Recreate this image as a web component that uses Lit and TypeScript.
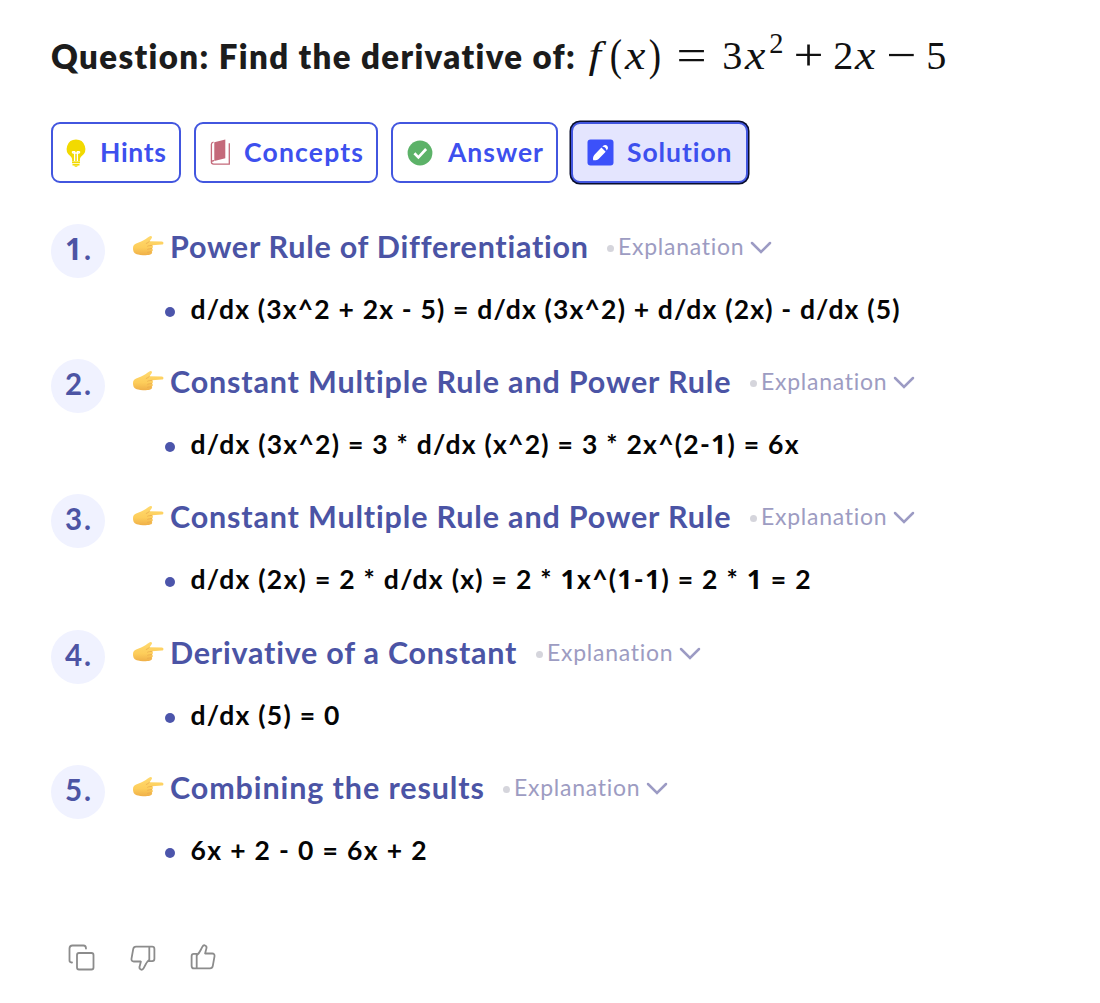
import { LitElement, html, css, svg } from "lit";
import { customElement, property } from "lit/decorators.js";

/** A single line of text, tracked so that it fills the given width. */
@customElement("fit-text")
class FitText extends LitElement {
  @property() text = "";
  @property({ type: Number }) width = 0;

  static styles = css`
    :host { display: inline-block; white-space: pre; text-align: left; }
    .line { display: inline-block; }
    .one { font-family: "Open Sans", sans-serif; font-weight: 700; }
  `;

  render() {
    const parts = this.text.split(/(1)/);
    return html`<span class="line">${parts.map((p) => (p === "1" ? html`<span class="one">1</span>` : p))}</span>`;
  }

  async firstUpdated() {
    await document.fonts.ready;
    const line = this.renderRoot.querySelector(".line") as HTMLElement;
    const natural = line.getBoundingClientRect().width;
    const gaps = Math.max(1, this.text.length - 1);
    line.style.letterSpacing = `${(this.width - natural) / gaps}px`;
    this.style.width = `${this.width}px`;
  }
}

const bulb = svg`<svg width="20" height="28" viewBox="0 0 20 28">
  <path fill="#f2da00" d="M10 .5a9.300 9.300 0 0 0-5.500 16.800c1 .9 1.500 1.800 1.600 3v2.200h7.800v-2.200c.1-1.200.6-2.100 1.600-3A9.300 9.300 0 0 0 10 .5z"/>
  <path fill="none" stroke="#fff" stroke-width="1.300" d="M6.200 12.700h2.400v9.300M13.800 12.700h-2.400v9.300M6.200 12.700c.3 1.600 1.300 1.600 2.400 1.300M13.800 12.700c-.3 1.600-1.300 1.600-2.400 1.300M8.600 14h2.800"/>
  <path fill="none" stroke="#f2da00" stroke-width="1.500" d="M6 23.600h8M6.500 25.700h7"/><path fill="#f2da00" d="M8 26.400h4l-1 1.400H9z"/></svg>`;

const book = svg`<svg width="21" height="27" viewBox="0 0 21 27">
  <path fill="#c4697a" d="M4.300 3.300 15.300.6v18.600L4.300 22z"/>
  <path fill="none" stroke="#c4697a" stroke-width="1.300" d="M3.500 3.200C1.700 3.500 1.400 4.200 1.400 5.300v17.800c0 1.600.8 2.100 2.200 2.100h15.700V4.200M2 22.600c.3-.8 1-.9 2-.9"/></svg>`;

const check = svg`<svg width="26" height="26" viewBox="0 0 26 26"><circle cx="13" cy="13" r="12.400" fill="#5cb268"/>
  <path d="M7.400 13.300l4 4.100 7.700-8.400" fill="none" stroke="#fff" stroke-width="2.700"/></svg>`;

const pencil = svg`<svg width="27" height="27" viewBox="0 0 27 27"><rect x=".5" y=".5" width="26" height="26" rx="3" fill="#3c51fa"/>
  <path fill="#fff" d="M6.200 21.200c-.5-2 .1-4.300 1.500-5.700l6.700-6.900 4.300 4.200-6.800 6.900c-1.400 1.300-3.700 2-5.700 1.500zM15.300 7.700l.9-.9c1.200-1.200 2.900-1.100 3.900-.1 1.100 1.100 1.200 2.900.1 4l-.7.900c.1-2.300-1.700-4.100-4.200-3.900z"/></svg>`;

const hand = html`<svg class="hand" width="32" height="22" viewBox="0 0 32 22">
  <defs><linearGradient id="skin" x1="0" y1="0" x2="0" y2="1"><stop offset="0" stop-color="#ffda70"/><stop offset=".6" stop-color="#fdcd5a"/><stop offset="1" stop-color="#efaf48"/></linearGradient></defs>
  <path fill="url(#skin)" d="M1 13c0-2.300 1.100-3.800 3.200-4.500C7.400 7.300 11 5.900 13.800 4c1.700-1.100 3.200-2.700 4.700-3 1.300-.2 1.900.9 1.300 2-.5 1-1.400 2.200-2.200 3.200l12.200.2c2.200.1 2.200 3.100 0 3.200l-9.700.6c1.100.8 1.100 2.500 0 3.200 1 .9.900 2.500-.3 3.200.7 1 .3 2.300-1 2.700-1.300.6-3.300.8-5 .9-3 .2-5.500.2-7.700-.6C2.400 18.800 1 17 1 13z"/>
  <path fill="none" stroke="#e8a84a" stroke-width=".7" stroke-linecap="round" d="M20 10.400c-1.600.1-3 .1-4.400.8M19.600 13.500c-1.500.3-2.700.3-4 .7M19 16.700c-1.400.3-2.400.4-3.500.6M17.300 6.500c-1 .8-1.700 1.500-3 2"/></svg>`;

const chevron = html`<svg class="chev" width="22" height="14" viewBox="0 0 22 14"><path d="M2 2l9 9 9-9" fill="none" stroke="#9c9bc4" stroke-width="2.500" stroke-linecap="round" stroke-linejoin="miter"/></svg>`;

const thumb = svg`<path d="M1.600 12.200c0-1.500.8-2.300 2.200-2.300h2.900v14.500H3.800c-1.400 0-2.200-.8-2.200-2.300zM6.700 11.300c1.700-1.300 3-3.200 4-5.300l1.600-3.100c.8-1.500 1.900-1.900 2.900-1.400 1.200.5 1.600 1.500 1.200 2.900l-1.300 5.100h7.100c1.700 0 2.600 1.200 2.300 2.800l-1.700 9.600c-.3 1.600-1.200 2.500-2.800 2.500H6.700"/>`;

interface Tab { label: string; width: number; icon: unknown; cls: string; }
const tabs: Tab[] = [
  { label: "Hints", width: 66, icon: bulb, cls: "hints" },
  { label: "Concepts", width: 119, icon: book, cls: "concepts" },
  { label: "Answer", width: 95, icon: check, cls: "answer" },
  { label: "Solution", width: 105, icon: pencil, cls: "solution" },
];

interface Step { title: string; titleWidth: number; formula: string; formulaWidth: number; }
const steps: Step[] = [
  { title: "Power Rule of Differentiation", titleWidth: 418, formula: "d/dx (3x^2 + 2x - 5) = d/dx (3x^2) + d/dx (2x) - d/dx (5)", formulaWidth: 709 },
  { title: "Constant Multiple Rule and Power Rule", titleWidth: 561, formula: "d/dx (3x^2) = 3 * d/dx (x^2) = 3 * 2x^(2-1) = 6x", formulaWidth: 608 },
  { title: "Constant Multiple Rule and Power Rule", titleWidth: 561, formula: "d/dx (2x) = 2 * d/dx (x) = 2 * 1x^(1-1) = 2 * 1 = 2", formulaWidth: 620 },
  { title: "Derivative of a Constant", titleWidth: 347, formula: "d/dx (5) = 0", formulaWidth: 149 },
  { title: "Combining the results", titleWidth: 314, formula: "6x + 2 - 0 = 6x + 2", formulaWidth: 236 },
];

@customElement("app-root")
class AppRoot extends LitElement {
  static styles = css`
    :host { display: block; box-sizing: border-box; width: 1100px; height: 1003px; padding: 20px 0 0 51px; background: #fff; overflow: hidden; font-family: Lato, "Open Sans", sans-serif; }
    * { box-sizing: border-box; }
    svg { display: block; flex: none; overflow: visible; }
    .question { display: flex; height: 70px; line-height: 72px; font-size: 33px; font-weight: 800; color: #1c1c1c; margin: 0; }
    .math { display: flex; margin-left: 4px; height: 70px; font: 400 41px/71px "Liberation Serif", serif; color: #111; }
    .m { display: inline-block; text-align: center; white-space: pre; flex: none; }
    .m span { display: inline-block; }
    .f { width: 29px; } .f span { transform: scale(1.1, .95); }
    .par { width: 14px; } .par span { transform: scale(.9, 1.08); }
    .var { width: 25px; } .var span { transform: scale(1.12, 1.03); }
    .num { width: 20.500px; } .num span { transform: scaleX(.98); }
    .op span { transform: scale(1.300, 1.100); }
    .op { width: 48px; } .eq { width: 60px; }
    .sup { width: 17px; font-size: 29px; line-height: 47px; }
    .tabs { display: flex; gap: 13px; margin-top: 32px; height: 61px; }
    .tab { display: flex; align-items: center; height: 61px; border: 2px solid #4256df; border-radius: 9px; background: #fff; color: #3d50ee; font-family: inherit; font-size: 26.500px; font-weight: 700; line-height: 57px; padding: 0; }
    .tab fit-text { padding-bottom: 1px; margin-left: auto; }
    .hints { width: 130px; padding: 0 13px 0 13px; }
    .concepts { width: 184px; padding: 0 13px 0 14px; }
    .answer { width: 167px; padding: 0 13px 0 14px; }
    .solution { width: 177px; padding: 0 14px 0 14px; background: #e4e5fe; box-shadow: 0 0 0 1.500px #080d2c; }
    .steps { list-style: none; margin: 41px 0 0; padding: 0; }
    .step { display: flex; height: 135.200px; }
    .badge { width: 54px; height: 54px; border-radius: 50%; background: #f0f2ff; color: #4c54a4; font-size: 29.500px; font-weight: 700; line-height: 50px; display: flex; justify-content: center; flex: none; }
    .body { margin-left: 27px; }
    .head { display: flex; height: 43px; line-height: 44px; color: #4b54a5; font-size: 30.500px; font-weight: 700; }
    .hand { margin: 11px 5px 0 0; }
    .head > fit-text { margin-left: 1px; }
    .expl { display: flex; margin-left: 19px; color: #9d9cc2; font-size: 23px; font-weight: 400; line-height: 45px; }
    .dot { width: 7px; height: 7px; border-radius: 50%; background: #d5d5dc; margin: 21px 4px 0 0; }
    .chev { margin: 17px 0 0 6px; }
    .formula { display: flex; margin: 22px 0 0 33px; line-height: 41px; font-size: 26.500px; font-weight: 700; color: #050505; }
    .bullet { width: 10px; height: 10px; border-radius: 50%; background: #4c55ab; margin: 18px 16px 0 -.5px; }
    .actions { display: flex; gap: 34px; margin: 44px 0 0 17px; }
    .actions svg { fill: none; stroke: #8c8c8c; stroke-width: 1.800; stroke-linejoin: round; stroke-linecap: round; }
    .down { transform: rotate(180deg); }
  `;

  private token(cls: string, text: string, italic = false) {
    return html`<span class="m ${cls}"><span>${italic ? html`<i>${text}</i>` : text}</span></span>`;
  }

  render() {
    return html`
      <h1 class="question"><fit-text .text=${"Question: Find the derivative of:"} .width=${525}></fit-text>
        <div class="math">${this.token("f", "f", true)}${this.token("par", "(")}${this.token("var", "x", true)}${this.token("par", ")")}${this.token("op eq", "=")}${this.token("num", "3")}${this.token("var", "x", true)}${this.token("num sup", "2")}${this.token("op", "+")}${this.token("num", "2")}${this.token("var", "x", true)}${this.token("op", "−")}${this.token("num", "5")}</div>
      </h1>
      <div class="tabs">${tabs.map((t) => html`<button class="tab ${t.cls}">${t.icon}<fit-text .text=${t.label} .width=${t.width}></fit-text></button>`)}</div>
      <ol class="steps">${steps.map((s, i) => html`
        <li class="step">
          <div class="badge"><fit-text .text=${`${i + 1}.`} .width=${26}></fit-text></div>
          <div class="body">
            <div class="head">${hand}<fit-text .text=${s.title} .width=${s.titleWidth}></fit-text>
              <div class="expl"><span class="dot"></span><fit-text .text=${"Explanation"} .width=${126}></fit-text>${chevron}</div>
            </div>
            <div class="formula"><span class="bullet"></span><fit-text .text=${s.formula} .width=${s.formulaWidth}></fit-text></div>
          </div>
        </li>`)}</ol>
      <div class="actions">
        <svg width="27" height="27" viewBox="0 0 27 27"><rect x="9" y="9" width="16.500" height="16.500" rx="2"/><path d="M4 18.500H3.500C2.200 18.500 1.500 17.800 1.500 16.500V4.500C1.500 2.500 2.500 1.500 4.500 1.500H15.500C17 1.500 18 2.500 18 4.500"/></svg>
        <svg class="down" width="27" height="27" viewBox="0 0 27 27">${thumb}</svg>
        <svg width="27" height="27" viewBox="0 0 27 27">${thumb}</svg>
      </div>`;
  }
}
